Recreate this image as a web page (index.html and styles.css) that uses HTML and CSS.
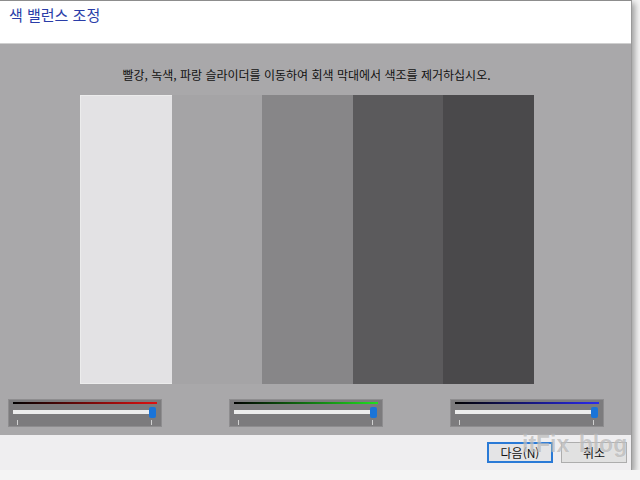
FILE: index.html
```
<!DOCTYPE html>
<html lang="ko">
<head>
    <meta charset="UTF-8">
    <title>색 밸런스 조정</title>
    <link rel="stylesheet" href="styles.css">
</head>
<body>
    <div class="window">
        <header class="title-bar">
            <h1>색 밸런스 조정</h1>
        </header>
        <main class="content">
            <p class="hint">빨강, 녹색, 파랑 슬라이더를 이동하여 회색 막대에서 색조를 제거하십시오.</p>
            <div class="bars">
                <div class="bar b1"></div>
                <div class="bar b2"></div>
                <div class="bar b3"></div>
                <div class="bar b4"></div>
                <div class="bar b5"></div>
            </div>
            <div class="sliders">
                <div class="slider">
                    <div class="ramp red"></div>
                    <div class="track"><span class="thumb"></span></div>
                    <div class="ticks"><span></span><span></span></div>
                </div>
                <div class="slider">
                    <div class="ramp green"></div>
                    <div class="track"><span class="thumb"></span></div>
                    <div class="ticks"><span></span><span></span></div>
                </div>
                <div class="slider">
                    <div class="ramp blue"></div>
                    <div class="track"><span class="thumb"></span></div>
                    <div class="ticks"><span></span><span></span></div>
                </div>
            </div>
        </main>
        <footer class="buttons">
            <button class="btn default">다음(N)</button>
            <button class="btn">취소</button>
            <span class="watermark">itFix blog</span>
        </footer>
    </div>
</body>
</html>
```

FILE: styles.css
```
body {
    margin: 0;
    background: #f4f4f4;
    font-family: "Noto Sans CJK KR", "Noto Sans", sans-serif;
}
.window {
    width: 632px;
    height: 470px;
    display: flex;
    flex-direction: column;
    background: #fff;
    border-top: 1px solid #8d8d8d;
    border-right: 1px solid #9a9a9a;
    box-sizing: border-box;
    box-shadow: 3px 3px 6px rgba(0, 0, 0, 0.35);
}
.title-bar {
    height: 42px;
    border-bottom: 1px solid #cfcfcf;
    padding-left: 9px;
}
.title-bar h1 {
    margin: 0;
    padding-top: 3px;
    font-size: 15px;
    font-weight: normal;
    color: #2a3da8;
}
.content {
    flex: 1;
    background: #a9a8aa;
    display: flex;
    flex-direction: column;
}
.hint {
    margin: 22px 0 0;
    padding-right: 18px;
    text-align: center;
    font-size: 12px;
    line-height: 18px;
    color: #111;
}
.bars {
    display: flex;
    margin: 11px 0 0 80px;
    width: 454px;
    height: 289px;
}
.bar {
    flex: 1;
}
.b1 { background: #e3e2e4; border: 1px solid #ececec; border-right: 0; }
.b2 { background: #a5a4a6; }
.b3 { background: #878688; }
.b4 { background: #5b5a5c; }
.b5 { background: #4a494b; }
.sliders {
    display: flex;
    justify-content: space-between;
    margin: 15px 27px 0 8px;
}
.slider {
    width: 154px;
    height: 28px;
    background: #7c7b7d;
    border: 1px solid #8e8d8f;
    box-sizing: border-box;
    padding: 2px 4px 0 4px;
}
.ramp {
    height: 2px;
}
.red { background: linear-gradient(to right, #000, #e01010); }
.green { background: linear-gradient(to right, #000, #20e020); }
.blue { background: linear-gradient(to right, #000, #2a2af0); }
.track {
    position: relative;
    margin-top: 6px;
    height: 4px;
    margin-right: 8px;
    background: #ececec;
}
.thumb {
    position: absolute;
    right: -7px;
    top: -3px;
    width: 7px;
    height: 11px;
    background: #1a74d8;
    border-radius: 2px;
}
.ticks {
    display: flex;
    justify-content: space-between;
    margin: 6px 5px 0 4px;
}
.ticks span {
    width: 1px;
    height: 5px;
    background: #d0d0d0;
}
.buttons {
    position: relative;
    height: 35px;
    background: #efeef0;
    display: flex;
    justify-content: flex-end;
    align-items: center;
    gap: 8px;
    padding: 0 4px 0 0;
}
.btn {
    width: 66px;
    height: 21px;
    font-family: inherit;
    font-size: 12px;
    color: #111;
    background: #e1e1e1;
    border: 1px solid #adadad;
    padding: 0;
}
.btn.default {
    border: 2px solid #2a7ad6;
    background: #e4e4e6;
}
.watermark {
    position: absolute;
    left: 522px;
    top: -4px;
    white-space: nowrap;
    font-family: "Liberation Sans", Arial, sans-serif;
    font-weight: bold;
    font-size: 23px;
    line-height: 26px;
    word-spacing: 3px;
    color: rgba(140, 140, 140, 0.45);
    text-shadow: 0 0 1px rgba(255, 255, 255, 0.6);
    pointer-events: none;
}
```
